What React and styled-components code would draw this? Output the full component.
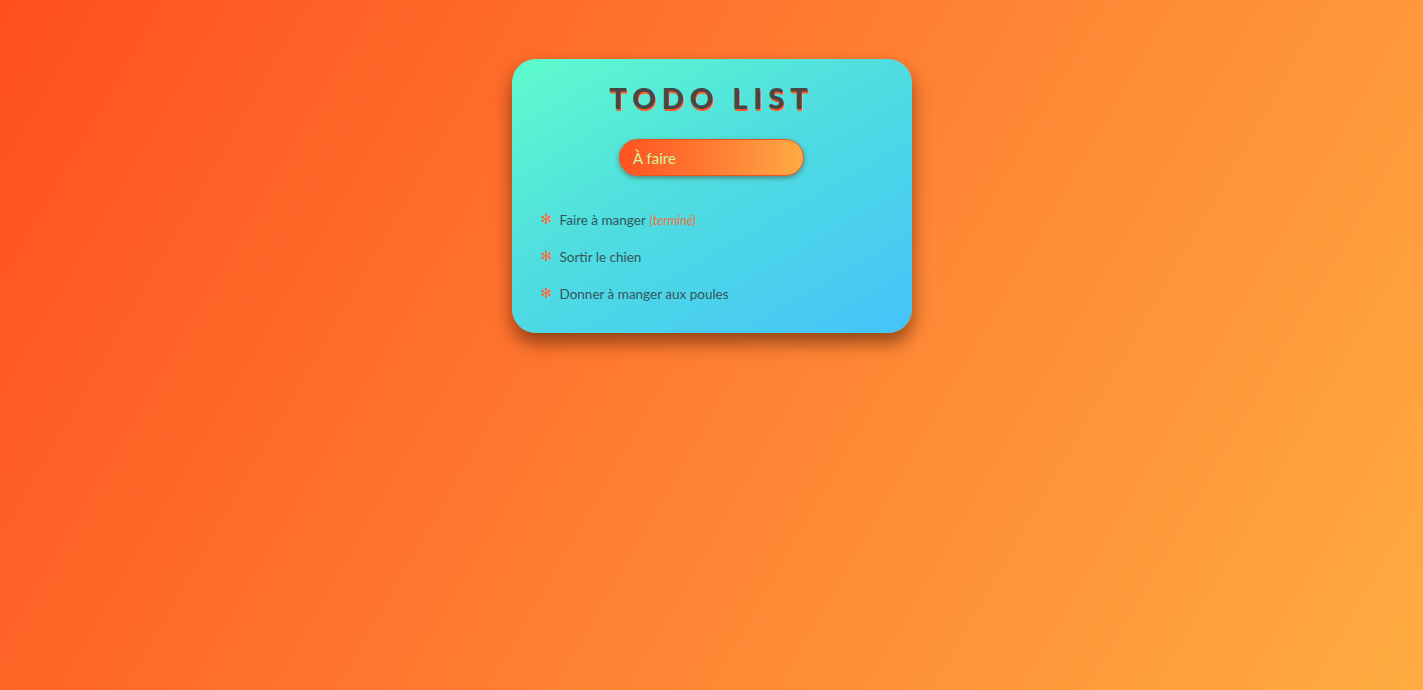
import React from "react";
import styled, { createGlobalStyle } from "styled-components";

const GlobalStyle = createGlobalStyle`
  html, body { margin: 0; padding: 0; }
  body {
    min-height: 100vh;
    background: linear-gradient(120deg, #ff4f1f 0%, #ff7a30 45%, #ffac42 100%);
    font-family: Lato, "Noto Sans", sans-serif;
  }
  #root { min-height: 100vh; }
`;

const Page = styled.div`
  min-height: 100vh;
  display: flex;
  justify-content: center;
  align-items: flex-start;
  padding-top: 59px;
  box-sizing: border-box;
`;

const Card = styled.div`
  width: 400px;
  height: 274px;
  box-sizing: border-box;
  border-radius: 24px;
  background: linear-gradient(150deg, #5efccd 0%, #4fdde0 45%, #45c3fa 100%);
  box-shadow: 0 10px 18px rgba(60, 20, 0, 0.55);
  display: flex;
  flex-direction: column;
  align-items: center;
  padding-top: 21px;
`;

const Title = styled.h1`
  margin: 0;
  font-family: Lato, sans-serif;
  font-weight: 900;
  font-size: 29px;
  line-height: 36px;
  letter-spacing: 6px;
  color: #474747;
  text-shadow: 1px 2px 0 #ff5a2a;
`;

const Input = styled.input`
  margin-top: 23px;
  width: 185px;
  height: 37px;
  box-sizing: border-box;
  border-radius: 19px;
  border: 1px solid #e5561f;
  background: linear-gradient(90deg, #ff5320 0%, #ff7f35 55%, #ffab45 100%);
  box-shadow: 0 2px 5px rgba(80, 30, 0, 0.45);
  padding: 0 13px;
  font-family: Lato, sans-serif;
  font-size: 15px;
  color: #cdf7a2;
  outline: none;
  &::placeholder { color: #cdf7a2; }
`;

const List = styled.ul`
  list-style: none;
  margin: 34px 0 0;
  padding: 0 0 0 29px;
  align-self: stretch;
  display: flex;
  flex-direction: column;
  gap: 17px;
`;

const Item = styled.li`
  display: flex;
  align-items: center;
  height: 20px;
  font-family: Lato, sans-serif;
  font-size: 13.5px;
  color: #35555a;
`;

const Star = styled.span`
  font-family: "DejaVu Sans", sans-serif;
  font-weight: bold;
  color: #ff6a3a;
  font-size: 14px;
  width: 19px;
  margin-top: -2px;
`;

const Done = styled.em`
  color: #f0703a;
  font-size: 12.5px;
  margin-left: 4px;
`;

const todos = [
  { label: "Faire à manger", done: true },
  { label: "Sortir le chien", done: false },
  { label: "Donner à manger aux poules", done: false },
];

export default function App() {
  return (
    <>
      <GlobalStyle />
      <Page>
        <Card>
          <Title>TODO LIST</Title>
          <Input defaultValue="À faire" />
          <List>
            {todos.map((t) => (
              <Item key={t.label}>
                <Star>✻</Star>
                {t.label}
                {t.done && <Done>(terminé)</Done>}
              </Item>
            ))}
          </List>
        </Card>
      </Page>
    </>
  );
}
